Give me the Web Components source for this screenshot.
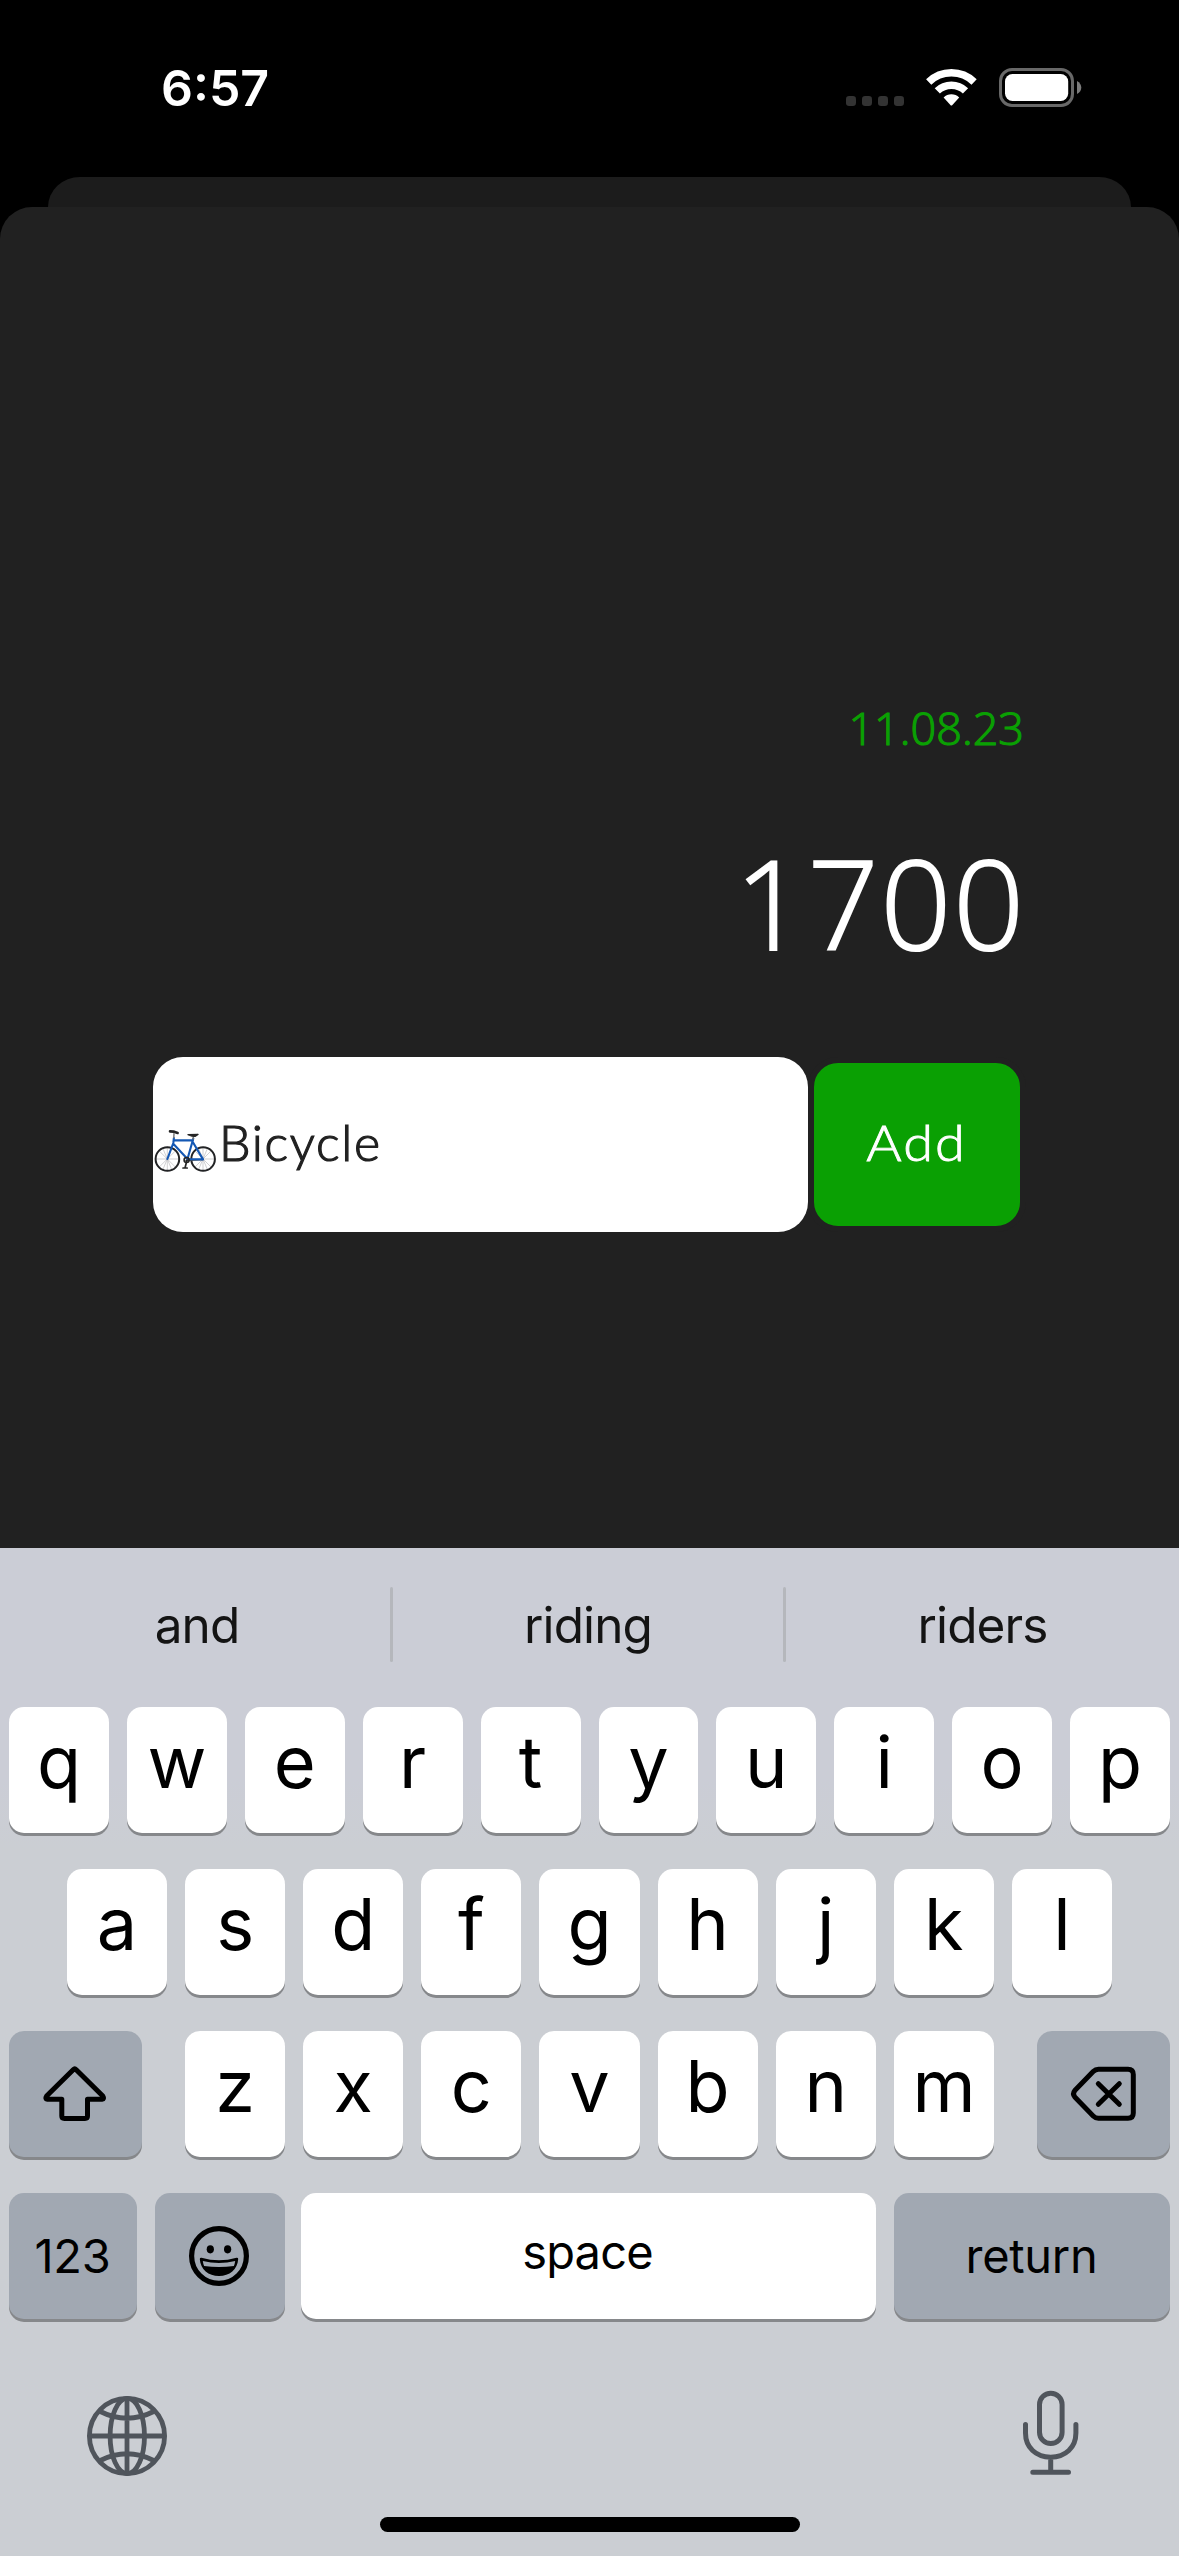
<!DOCTYPE html>
<html lang="en"><head><meta charset="utf-8"><title>Add expense</title>
<style>html,body{margin:0;background:#000}body{width:1179px;height:2556px;overflow:hidden}</style></head>
<body>
<expense-app></expense-app>
<script>
const define = (name, html) => customElements.define(name, class extends HTMLElement {
  constructor() { super(); this.attachShadow({ mode: 'open' }).innerHTML = html; }
});

define('status-icons', `<style>:host{display:block;width:236px;height:39px}svg{display:block}</style>
<svg width="236" height="39" viewBox="26 18 236 39">
<g fill="#333"><rect x="26" y="46" width="10" height="10" rx="3.2"/><rect x="42" y="46" width="10" height="10" rx="3.2"/><rect x="58" y="46" width="10" height="10" rx="3.2"/><rect x="74" y="46" width="10" height="10" rx="3.2"/></g>
<g fill="none" stroke="#fff" stroke-width="7.5"><path d="M108.7 32A32.7 32.7 0 0 1 154.1 32"/><path d="M117.3 40.9A20.3 20.3 0 0 1 145.5 40.9"/></g>
<path fill="#fff" d="M123.6 47.5A11.2 11.2 0 0 1 139.2 47.5L132.4 55Q131.4 56 130.4 55Z"/>
<rect x="180.5" y="19.5" width="72" height="36" rx="11.5" fill="none" stroke="#686868" stroke-width="3"/>
<rect x="185" y="24" width="63.2" height="27" rx="7.5" fill="#fff"/><path d="M257 31Q261.3 33.5 261.3 37.6T257 44Z" fill="#7c7c7c"/></svg>`);

define('status-bar', `<style>:host{display:flex;justify-content:space-between;align-items:flex-start;height:109px;padding:68px 97px 0 161px;color:#fff}
time{font:600 50px/40px Inter,sans-serif}</style><time>6:57</time><status-icons></status-icons>`);

define('bicycle-icon', `<style>:host{display:block;width:63px;height:44px}svg{display:block}</style>
<svg width="63" height="44" viewBox="14 89 63 44" fill="none" stroke-linecap="round" stroke-linejoin="round">
<g stroke="#b0b0b3" stroke-width=".6"><path d="M27.3 107v24M15.3 119h24M18.8 110.5l17 17M18.8 127.5l17-17M63 107v24M51 119h24M54.5 110.5l17 17M54.5 127.5l17-17M22.7 108l9.2 22M22.7 130l9.2-22M58.4 108l9.2 22M58.4 130l9.2-22"/></g>
<g stroke="#222325" stroke-width="2"><circle cx="27.4" cy="119" r="11.8"/><circle cx="63.1" cy="119" r="11.8"/></g>
<path d="M46 120.5L63 119.6" stroke="#444" stroke-width="1.4"/>
<path d="M33.9 98L33.3 103L27.4 119M33.6 100.4H53M33.5 104L47.5 119L53.3 98.5M47.5 119.3L63 119.4L52.8 102" stroke="#1458b4" stroke-width="2.1"/>
<g stroke="#252525"><path d="M30 91.4L33.5 91.6L37.6 93" stroke-width="2.6"/><path d="M34 93.5L33.8 97.5M53.6 96L53 99" stroke="#777" stroke-width="1.5"/><path d="M48 94.7L58 94.4L55 96.3L52 96Z" fill="#252525" stroke-width="1.4"/><circle cx="46.6" cy="120" r="2.5" stroke-width="1.6"/><path d="M47 120L45 128M43 128h4.2" stroke-width="1.7"/></g></svg>`);

define('expense-field', `<style>:host{display:flex;align-items:center;width:655px;height:175px;box-sizing:border-box;padding-left:1px;border-radius:30px;background:#fff;color:#212121}
bicycle-icon{margin-top:13px}span{font:300 50px/60px Lato,sans-serif;letter-spacing:1.7px;-webkit-text-stroke:1.2px currentColor;padding:0 0 6px 2px}</style><bicycle-icon></bicycle-icon><span><slot></slot></span>`);
define('add-button', `<style>:host{display:flex;align-items:center;justify-content:center;width:218px;height:175px;box-sizing:border-box;border:6px solid #212121;border-radius:30px;background:#0aa003;color:#fff}
span{font:300 50px/60px Lato,sans-serif;letter-spacing:2px;-webkit-text-stroke:.9px currentColor;transform:scaleX(1.08);padding:0 0 6px}</style><span><slot></slot></span>`);

define('expense-sheet', `<style>:host{display:flex;flex-direction:column;height:1371px}
.back{height:30px;margin:0 48px;border-radius:32px 32px 0 0/30px 30px 0 0;background:#1c1c1c}
.sheet{height:1341px;box-sizing:border-box;border-radius:32px 32px 0 0;background:#212121;padding:491px 153px 0;display:flex;flex-direction:column}
.date{font:300 45px/60px "Open Sans",sans-serif;color:#0aa003;text-align:right;padding-right:2px;-webkit-text-stroke:1.2px currentColor}
.amount{font:300 124px/140px "Open Sans",sans-serif;color:#fff;text-align:right;letter-spacing:2px;padding:74px 0 85px;-webkit-text-stroke:2px currentColor}
.row{display:flex}</style>
<div class="back"></div><div class="sheet"><div class="date">11.08.23</div><div class="amount">1700</div>
<div class="row"><expense-field>Bicycle</expense-field><add-button>Add</add-button></div></div>`);

define('suggestion-bar', `<style>:host{display:flex;align-items:center;height:75px;padding:39px 0 45px}
span{width:390px;text-align:center;font:400 49.5px/60px Inter,sans-serif;letter-spacing:-.9px;color:#141414}
span:first-of-type{text-indent:4px}span:last-of-type{width:393px}
i{width:3px;height:75px;border-radius:2px;background:#b5b7bc}</style><span>and</span><i></i><span>riding</span><i></i><span>riders</span>`);

define('kb-key', `<style>:host{display:flex;align-items:center;justify-content:center;flex:1;height:126px;box-sizing:border-box;padding-bottom:16px;border-radius:15px;background:#fff;box-shadow:0 3px 0 #86888b;color:#000;font:375 72px/110px Inter,sans-serif}
:host([dark]){background:#a1a8b2}:host([word]){font-size:47px;font-weight:400;letter-spacing:-.3px;padding:0 1px 0 0}:host([space]){padding:0 2px 8px 0;letter-spacing:-.8px}
:host([icon]){padding:0}::slotted(svg){display:block}</style><slot></slot>`);

const keys = s => [...s].map(c => `<kb-key>${c}</kb-key>`).join('');
define('key-board', `<style>:host{display:flex;flex-direction:column;height:1008px;background:linear-gradient(#cbcdd6 0,#cbcdd6 230px,#cbced3 300px)}
.row{display:flex;gap:18px;padding:0 9px;margin-bottom:36px}.two{padding:0 67px}
.three{gap:43px}.mid{display:flex;flex:1;gap:18px}.w133{flex:0 0 133px}.last{margin-bottom:0}
.tools{display:flex;justify-content:space-between;padding:6px 59px 0 60px;height:130px;margin-top:45px}
.home{width:420px;height:15px;border-radius:8px;background:#000;margin:17px auto 0}</style>
<suggestion-bar></suggestion-bar>
<div class="row">${keys('qwertyuiop')}</div>
<div class="row two">${keys('asdfghjkl')}</div>
<div class="row three"><kb-key class="w133" dark icon><svg width="133" height="126" viewBox="9 21 133 126" fill="none" stroke="#000" stroke-width="5" stroke-linejoin="round"><path d="M73.2 59.7Q74.7 58.2 76.2 59.7L102.8 86.1Q104.6 88.9 102 89.2H87.5V106Q87.5 108.4 85 108.4H64.4Q61.8 108.4 61.8 106V89.2H47.4Q44.8 88.9 46.6 86.1Z"/></svg></kb-key>
<div class="mid">${keys('zxcvbnm')}</div>
<kb-key class="w133" dark icon><svg width="133" height="126" viewBox="257 21 133 126" fill="none" stroke="#000" stroke-width="5" stroke-linecap="round" stroke-linejoin="round"><path d="M318.5 59.3H348Q353.3 59.3 353.3 64.6V103Q353.3 108.3 348 108.3H318.5Q315.5 108.3 313.2 106L294.8 87Q292.2 83.8 294.8 80.6L313.2 61.6Q315.5 59.3 318.5 59.3ZM318.3 73.7L339.3 94.3M339.3 73.7L318.3 94.3"/></svg></kb-key></div>
<div class="row last"><kb-key dark word style="flex:0 0 128px">123</kb-key>
<kb-key dark icon style="flex:0 0 130px"><svg width="130" height="126" viewBox="155 183 130 126"><circle cx="219" cy="246" r="27.4" fill="none" stroke="#000" stroke-width="5.2"/><ellipse cx="210.3" cy="239.3" rx="3.6" ry="4.1"/><ellipse cx="227.6" cy="239.3" rx="3.6" ry="4.1"/><path d="M199.8 249Q199.8 247.4 201.5 247.7Q219 252.7 236.5 247.7Q238.2 247.4 238.2 249C237.6 259.5 229.5 266 219 266S200.4 259.5 199.8 249Z"/><path fill="#a1a8b2" d="M202.8 251Q219 255 235.2 251Q234.8 253.8 233.9 256Q219 258 204.1 256Q203.2 253.8 202.8 251Z"/></svg></kb-key>
<kb-key word space style="margin-left:-2px">space</kb-key><kb-key dark word style="flex:0 0 276px">return</kb-key></div>
<div class="tools"><svg width="140" height="130" viewBox="0 0 140 130" fill="none" stroke="#50555c" stroke-width="4.8"><circle cx="67" cy="66" r="37.6"/><ellipse cx="67.3" cy="66" rx="17.2" ry="37.6"/><path d="M67 28V104M29 66H105M40.3 41.5Q67 55 93.7 41.5M40.3 90.5Q67 77 93.7 90.5"/></svg>
<svg width="140" height="130" viewBox="0 0 140 130" fill="none" stroke="#50555c" stroke-width="5" stroke-linecap="round"><rect x="59.5" y="23.2" width="22.6" height="50.3" rx="11.3"/><path d="M45.5 54.5V63C45.5 77.5 56 87.2 70.7 87.2S95.9 77.5 95.9 63V54.5M70.7 87.5V102.3M52.8 102.3H88.5"/></svg></div>
<div class="home"></div>`);

define('expense-app', `<style>:host{display:flex;flex-direction:column;width:1179px;height:2556px;background:#000}</style><status-bar></status-bar><expense-sheet></expense-sheet><key-board></key-board>`);
</script></body></html>
